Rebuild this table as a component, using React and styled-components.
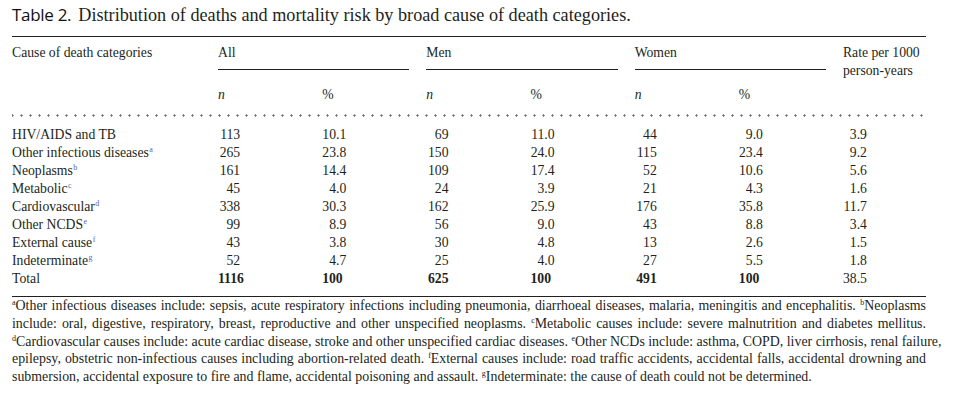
import React from 'react';
import styled, { createGlobalStyle } from 'styled-components';

const GlobalStyle = createGlobalStyle`
  html, body {
    margin: 0;
    padding: 0;
    background: #fff;
  }
  body {
    font-family: "Liberation Serif", "Times New Roman", serif;
    color: #231f20;
  }
`;

const rows = [
  { label: 'HIV/AIDS and TB', all: ['113', '10.1'], men: ['69', '11.0'], women: ['44', '9.0'], rate: '3.9' },
  { label: 'Other infectious diseases', note: 'a', all: ['265', '23.8'], men: ['150', '24.0'], women: ['115', '23.4'], rate: '9.2' },
  { label: 'Neoplasms', note: 'b', all: ['161', '14.4'], men: ['109', '17.4'], women: ['52', '10.6'], rate: '5.6' },
  { label: 'Metabolic', note: 'c', all: ['45', '4.0'], men: ['24', '3.9'], women: ['21', '4.3'], rate: '1.6' },
  { label: 'Cardiovascular', note: 'd', all: ['338', '30.3'], men: ['162', '25.9'], women: ['176', '35.8'], rate: '11.7' },
  { label: 'Other NCDS', note: 'e', all: ['99', '8.9'], men: ['56', '9.0'], women: ['43', '8.8'], rate: '3.4' },
  { label: 'External cause', note: 'f', all: ['43', '3.8'], men: ['30', '4.8'], women: ['13', '2.6'], rate: '1.5' },
  { label: 'Indeterminate', note: 'g', all: ['52', '4.7'], men: ['25', '4.0'], women: ['27', '5.5'], rate: '1.8' },
  { label: 'Total', total: true, all: ['1116', '100'], men: ['625', '100'], women: ['491', '100'], rate: '38.5' },
];

const footnotes = [
  [['a', 'Other infectious diseases include: sepsis, acute respiratory infections including pneumonia, diarrhoeal diseases, malaria, meningitis and encephalitis. '], ['b', 'Neoplasms']],
  [[null, 'include: oral, digestive, respiratory, breast, reproductive and other unspecified neoplasms. '], ['c', 'Metabolic causes include: severe malnutrition and diabetes mellitus.']],
  [['d', 'Cardiovascular causes include: acute cardiac disease, stroke and other unspecified cardiac diseases. '], ['e', 'Other NCDs include: asthma, COPD, liver cirrhosis, renal failure,']],
  [[null, 'epilepsy, obstetric non-infectious causes including abortion-related death. '], ['f', 'External causes include: road traffic accidents, accidental falls, accidental drowning and']],
  [[null, 'submersion, accidental exposure to fire and flame, accidental poisoning and assault. '], ['g', 'Indeterminate: the cause of death could not be determined.']],
];

const Page = styled.div`
  box-sizing: border-box;
  width: 959px;
  padding: 0 33px 0 12px;
`;

const Title = styled.div`
  width: 914px;
  height: 36px;
  box-sizing: border-box;
  padding-top: 4px;
  font-size: 18.2px;
  line-height: 22px;
  white-space: nowrap;
`;

const TableNo = styled.span`
  font-family: "Open Sans", "Noto Sans", sans-serif;
  font-size: 17px;
  font-weight: 500;
  color: #111;
  margin-right: 7px;
  letter-spacing: -0.3px;
`;

const Grid = styled.div`
  display: grid;
  width: 914px;
  grid-template-columns: 206px repeat(6, 104.17px) 83px;
  border-top: 1px solid #231f20;
  border-bottom: 1px solid #231f20;
  padding-bottom: 8px;
  font-size: 13.7px;
  line-height: 18px;
`;

const HeadCell = styled.div`
  padding-top: 7px;
  white-space: nowrap;
`;

const GroupHead = styled.div`
  grid-column: span 2;
  margin-right: 17px;
  padding: 7px 0 7px;
  border-bottom: 1px solid #231f20;
`;

const RateHead = styled.div`
  grid-row: span 2;
  padding-top: 7px;
  white-space: nowrap;
`;

const SubHead = styled.div`
  padding: 16px 0 10px;
  font-style: ${(p) => (p.$italic ? 'italic' : 'normal')};
`;

const Dots = styled.div`
  grid-column: 1 / -1;
  height: 3px;
  margin-bottom: 9px;
  background-image: radial-gradient(circle, #6b6b6b 0.9px, transparent 1.3px);
  background-size: 9px 3px;
  background-position: -4px 0;
`;

const Label = styled.div`
  white-space: nowrap;
`;

const Num = styled.div`
  text-align: right;
  padding-right: ${(p) => p.$pr}px;
  font-weight: ${(p) => (p.$bold ? 700 : 400)};
  white-space: nowrap;
`;

const Frac = styled.span`
  display: inline-block;
  width: 10.3px;
  text-align: left;
`;

const Note = styled.sup`
  font-size: 8px;
  line-height: 0;
  vertical-align: 5px;
  color: ${(p) => (p.$link ? '#5a66b4' : '#231f20')};
  margin-left: ${(p) => (p.$link ? '0.5px' : '0')};
`;

const Footnotes = styled.div`
  width: 914px;
  padding-top: 0;
  font-size: 13.9px;
  line-height: 17.8px;
`;

const FootLine = styled.div`
  white-space: nowrap;
  text-align: ${(p) => (p.$last ? 'left' : 'justify')};
  text-align-last: ${(p) => (p.$last ? 'left' : 'justify')};
`;

const Pct = ({ value, bold }) => {
  const [int, dec] = value.split('.');
  return (
    <Num $pr={80} $bold={bold}>
      {int}
      <Frac>{dec ? `.${dec}` : ''}</Frac>
    </Num>
  );
};

export default function App() {
  return (
    <Page>
      <GlobalStyle />
      <Title>
        <TableNo>Table 2.</TableNo>
        Distribution of deaths and mortality risk by broad cause of death categories.
      </Title>
      <Grid>
        <HeadCell>Cause of death categories</HeadCell>
        <GroupHead>All</GroupHead>
        <GroupHead>Men</GroupHead>
        <GroupHead>Women</GroupHead>
        <RateHead>
          Rate per 1000
          <br />
          person-years
        </RateHead>
        <SubHead />
        {['All', 'Men', 'Women'].map((g) => (
          <React.Fragment key={g}>
            <SubHead $italic>n</SubHead>
            <SubHead>%</SubHead>
          </React.Fragment>
        ))}
        <Dots />
        {rows.map((r) => (
          <React.Fragment key={r.label}>
            <Label>
              {r.label}
              {r.note && <Note $link>{r.note}</Note>}
            </Label>
            {[r.all, r.men, r.women].map(([n, pct], i) => (
              <React.Fragment key={i}>
                <Num $pr={82} $bold={r.total}>{n}</Num>
                <Pct value={pct} bold={r.total} />
              </React.Fragment>
            ))}
            <Num $pr={59}>{r.rate}</Num>
          </React.Fragment>
        ))}
      </Grid>
      <Footnotes>
        {footnotes.map((line, i) => (
          <FootLine key={i} $last={i === footnotes.length - 1}>
            {line.map(([mark, text], j) => (
              <React.Fragment key={j}>
                {mark && <Note>{mark}</Note>}
                {text}
              </React.Fragment>
            ))}
          </FootLine>
        ))}
      </Footnotes>
    </Page>
  );
}
